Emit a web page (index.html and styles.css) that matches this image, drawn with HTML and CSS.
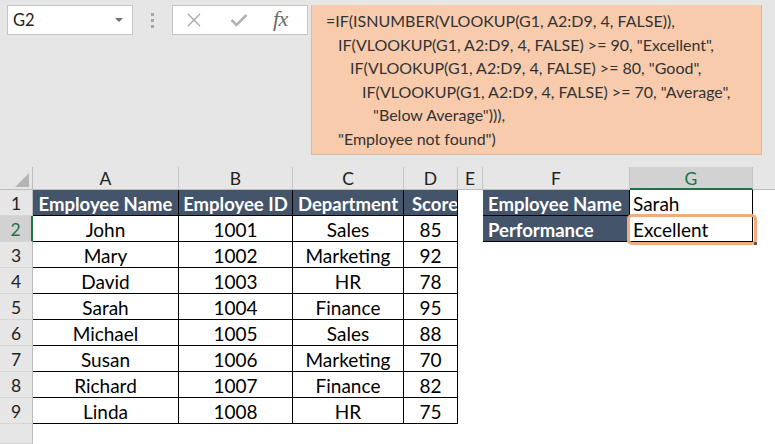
FILE: index.html
```html
<!DOCTYPE html>
<html>
<head>
<meta charset="utf-8">
<link rel="stylesheet" href="styles.css">
</head>
<body>
<div class="app">
  <div class="bar">
    <div class="namebox">
      <span class="ref">G2</span>
      <svg class="dd" width="8" height="5" viewBox="0 0 8 5"><path d="M0 0H8L4 4Z" fill="#707070"/></svg>
    </div>
    <div class="dots"><i></i><i></i><i></i></div>
    <div class="fxbox">
      <svg class="ic" width="16" height="14" viewBox="0 0 16 14"><path d="M2 1L14 13M14 1L2 13" stroke="#a9a9a9" stroke-width="1.4" fill="none"/></svg>
      <svg class="ic" width="18" height="14" viewBox="0 0 18 14"><path d="M1.5 7L6.5 12L16.5 2" stroke="#b3b3b3" stroke-width="2.6" fill="none"/></svg>
      <span class="fx">fx</span>
    </div>
    <div class="formula">
      <div>=IF(ISNUMBER(VLOOKUP(G1, A2:D9, 4, FALSE)),</div>
      <div class="i1">IF(VLOOKUP(G1, A2:D9, 4, FALSE) &gt;= 90, "Excellent",</div>
      <div class="i2">IF(VLOOKUP(G1, A2:D9, 4, FALSE) &gt;= 80, "Good",</div>
      <div class="i3">IF(VLOOKUP(G1, A2:D9, 4, FALSE) &gt;= 70, "Average",</div>
      <div class="i4">"Below Average"))),</div>
      <div class="i1">"Employee not found")</div>
    </div>
  </div>
  <div class="sheet">
    <div class="corner"><svg width="14" height="14" viewBox="0 0 14 14"><path d="M14 0V14H0Z" fill="#b5b5b5"/></svg></div>
    <div class="ch">A</div><div class="ch">B</div><div class="ch">C</div><div class="ch">D</div><div class="ch">E</div><div class="ch">F</div><div class="ch sel">G</div><div class="ch last"></div>

    <div class="rh">1</div>
    <div class="c t h">Employee Name</div><div class="c t h">Employee ID</div><div class="c t h">Department</div><div class="c t h clip">Score</div>
    <div class="c"></div><div class="c t h l">Employee Name</div><div class="c t l">Sarah</div><div class="c"></div>

    <div class="rh sel">2</div>
    <div class="c t">John</div><div class="c t">1001</div><div class="c t">Sales</div><div class="c t">85</div>
    <div class="c"></div><div class="c t h l">Performance</div><div class="c t l">Excellent</div><div class="c"></div>

    <div class="rh">3</div>
    <div class="c t">Mary</div><div class="c t">1002</div><div class="c t">Marketing</div><div class="c t">92</div>
    <div class="c"></div><div class="c"></div><div class="c"></div><div class="c"></div>

    <div class="rh">4</div>
    <div class="c t">David</div><div class="c t">1003</div><div class="c t">HR</div><div class="c t">78</div>
    <div class="c"></div><div class="c"></div><div class="c"></div><div class="c"></div>

    <div class="rh">5</div>
    <div class="c t">Sarah</div><div class="c t">1004</div><div class="c t">Finance</div><div class="c t">95</div>
    <div class="c"></div><div class="c"></div><div class="c"></div><div class="c"></div>

    <div class="rh">6</div>
    <div class="c t">Michael</div><div class="c t">1005</div><div class="c t">Sales</div><div class="c t">88</div>
    <div class="c"></div><div class="c"></div><div class="c"></div><div class="c"></div>

    <div class="rh">7</div>
    <div class="c t">Susan</div><div class="c t">1006</div><div class="c t">Marketing</div><div class="c t">70</div>
    <div class="c"></div><div class="c"></div><div class="c"></div><div class="c"></div>

    <div class="rh">8</div>
    <div class="c t">Richard</div><div class="c t">1007</div><div class="c t">Finance</div><div class="c t">82</div>
    <div class="c"></div><div class="c"></div><div class="c"></div><div class="c"></div>

    <div class="rh">9</div>
    <div class="c t">Linda</div><div class="c t">1008</div><div class="c t">HR</div><div class="c t">75</div>
    <div class="c"></div><div class="c"></div><div class="c"></div><div class="c"></div>

    <div class="rh"></div>
    <div class="c"></div><div class="c"></div><div class="c"></div><div class="c"></div>
    <div class="c"></div><div class="c"></div><div class="c"></div><div class="c"></div>

    <div class="active"><span class="handle"></span></div>
  </div>
</div>
</body>
</html>
```
FILE: styles.css
```css
* { box-sizing: border-box; }
html, body { margin: 0; padding: 0; }
body { background: #e6e6e6; font-family: Lato, "Liberation Sans", sans-serif; }
.app { width: 775px; height: 444px; overflow: hidden; background: #e6e6e6; }

.bar { display: flex; align-items: flex-start; padding: 5px 0 0 7px; height: 155px; }
.namebox { width: 126px; height: 30px; background: #fff; border: 1px solid #c6c6c6; display: flex; align-items: center; justify-content: space-between; padding: 0 9px 0 5px; }
.ref { font-size: 16.5px; color: #222; }
.dd { margin-top: 1px; }
.dots { width: 39px; display: flex; flex-direction: column; align-items: center; gap: 3px; padding-top: 8px; }
.dots i { display: block; width: 3px; height: 3px; background: #a6a6a6; }
.fxbox { width: 136px; height: 30px; background: #fff; border: 1px solid #c6c6c6; display: flex; align-items: center; padding-left: 13px; gap: 28px; }
.fx { font-family: "Liberation Serif", serif; font-style: italic; font-size: 22px; color: #6a6a6a; letter-spacing: -0.5px; margin-left: -3px; margin-top: -3px; }
.formula { margin-left: 3px; width: 451px; height: 150px; background: #f8cbad; border: 1px solid #d8bc9e; border-top: none; padding: 4px 0 0 14px; font-size: 16px; line-height: 23.6px; color: #333; white-space: nowrap; }
.i1 { padding-left: 12px; }
.i2 { padding-left: 24px; }
.i3 { padding-left: 36px; }
.i4 { padding-left: 47px; }

.sheet { position: relative; margin-top: 12px; display: grid; grid-template-columns: 33px 146px 114px 111px 54px 25px 147px 123px 22px; grid-template-rows: 23px repeat(9, 26px) 20px; }
.corner { background: #e6e6e6; border-right: 1px solid #bdbdbd; border-bottom: 1px solid #bdbdbd; display: flex; align-items: flex-end; justify-content: flex-end; padding: 0 3px 2px 0; }
.ch { background: #e6e6e6; border-right: 1px solid #c4c4c4; border-bottom: 1px solid #bdbdbd; font-size: 17.5px; color: #222; display: flex; align-items: center; justify-content: center; padding-top: 1px; }
.ch.last { border-right: none; }
.ch.sel { background: #d2d2d2; color: #217346; border-bottom: 2px solid #217346; }
.rh { background: #e6e6e6; border-right: 1px solid #bdbdbd; border-bottom: 1px solid #d6d6d6; font-size: 17.5px; color: #222; display: flex; align-items: center; justify-content: center; padding-top: 1px; }
.rh.sel { background: #d2d2d2; color: #217346; border-right: 2px solid #217346; }
.c { background: #fff; font-size: 19px; color: #000; display: flex; align-items: center; justify-content: center; white-space: nowrap; overflow: hidden; padding-top: 2px; }
.c.t { border-right: 1px solid #000; border-bottom: 1px solid #000; }
.c.h { background: #44546a; color: #fff; font-weight: bold; font-size: 18.5px; }
.c.l { justify-content: flex-start; padding-left: 3px; }
.c.h.l { padding-left: 5px; }
.c.clip { justify-content: flex-start; padding-left: 8px; }

.active { position: absolute; left: 627px; top: 47px; width: 130px; height: 31px; border: 3px solid #f2ab7c; border-radius: 5px; }
.handle { position: absolute; right: -3px; bottom: -3px; width: 3px; height: 3px; background: #5a5a5a; }
```
